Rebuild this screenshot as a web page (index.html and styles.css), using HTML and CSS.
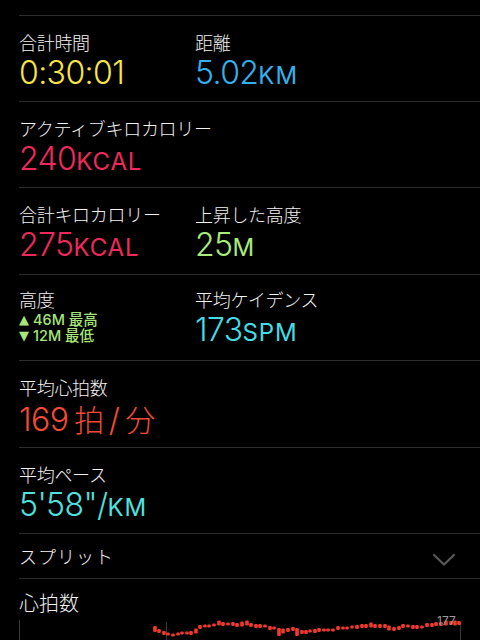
FILE: index.html
```html
<!DOCTYPE html>
<html lang="ja">
<head>
<meta charset="utf-8">
<link rel="stylesheet" href="styles.css">
</head>
<body>
<div class="screen">
  <div class="top-gap"></div>
  <section class="row">
    <div class="cell first">
      <div class="label">合計時間</div>
      <div class="value yellow">0:30:01</div>
    </div>
    <div class="cell">
      <div class="label">距離</div>
      <div class="value blue">5.02<span class="unit">KM</span></div>
    </div>
  </section>
  <section class="row">
    <div class="cell">
      <div class="label">アクティブキロカロリー</div>
      <div class="value pink">240<span class="unit">KCAL</span></div>
    </div>
  </section>
  <section class="row tall">
    <div class="cell first">
      <div class="label">合計キロカロリー</div>
      <div class="value pink">275<span class="unit">KCAL</span></div>
    </div>
    <div class="cell">
      <div class="label">上昇した高度</div>
      <div class="value green">25<span class="unit">M</span></div>
    </div>
  </section>
  <section class="row">
    <div class="cell first">
      <div class="label label-alt">高度</div>
      <div class="alt-line"><span class="tri">▲</span><span class="alt-txt">46M 最高</span></div>
      <div class="alt-line"><span class="tri">▼</span><span class="alt-txt">12M 最低</span></div>
    </div>
    <div class="cell">
      <div class="label label-alt">平均ケイデンス</div>
      <div class="value cyan">173<span class="unit">SPM</span></div>
    </div>
  </section>
  <section class="row tall">
    <div class="cell">
      <div class="label">平均心拍数</div>
      <div class="value red"><span>169</span><span class="cjk beat">拍</span><span class="slash">/</span><span class="cjk">分</span></div>
    </div>
  </section>
  <section class="row">
    <div class="cell">
      <div class="label">平均ペース</div>
      <div class="value aqua">5'58"/<span class="unit">KM</span></div>
    </div>
  </section>
  <section class="split">
    <span class="split-label">スプリット</span>
    <svg class="chev" width="24" height="14" viewBox="0 0 24 14"><path d="M2 2 L12 11.5 L22 2" fill="none" stroke="#5a5a5c" stroke-width="2.2" stroke-linecap="round" stroke-linejoin="round"/></svg>
  </section>
  <section class="hr">
    <div class="hr-label">心拍数</div>
    <div class="chart">
      <svg width="462" height="24" viewBox="0 616 462 24" id="chart">
        <line x1="19.5" y1="620" x2="19.5" y2="640" stroke="#3a3a3c" stroke-width="1"/>
        <line x1="166.5" y1="622" x2="166.5" y2="640" stroke="#3a3a3c" stroke-width="1"/>
        <line x1="460.5" y1="622" x2="460.5" y2="640" stroke="#3a3a3c" stroke-width="1"/>
        <g fill="#f2392c" id="bars"></g>
        <text x="437" y="624.5" class="ax">177</text>
      </svg>
    </div>
  </section>
</div>
<script src="chart.js"></script>
</body>
</html>
```
FILE: chart.js
```js
(function(){
  var pts=[[155,629,6],[159,631,4],[164,633,4],[168,634,3],[173,635,3],[178,634,3],[182,633,3],[187,633,3],[191,633,4],[196,631,5],[200,627,4],[205,626,3],[209,626,3],[214,625,3],[219,623,5],[223,624,4],[228,624,3],[233,624,4],[237,625,4],[242,624,5],[247,623,5],[251,625,4],[256,626,4],[260,626,4],[265,626,3],[270,628,4],[274,628,3],[279,632,8],[283,631,5],[288,630,4],[293,629,4],[297,632,8],[302,632,4],[306,632,4],[310,631,3],[315,631,4],[319,630,4],[324,630,3],[328,630,3],[333,630,3],[338,628,4],[343,628,3],[347,628,3],[352,627,3],[357,627,4],[362,626,4],[366,626,4],[371,625,5],[375,626,4],[380,626,4],[385,626,4],[389,628,5],[394,629,4],[399,628,4],[403,626,4],[408,626,3],[413,627,4],[417,627,4],[422,627,3],[427,625,4],[432,625,4],[436,624,4],[441,624,4],[446,623,5],[451,623,4],[455,623,5],[459,623,4]];
  var g=document.getElementById('bars');
  var ns='http://www.w3.org/2000/svg';
  pts.forEach(function(p){
    var r=document.createElementNS(ns,'rect');
    r.setAttribute('x',p[0]-1.8);
    r.setAttribute('y',p[1]-p[2]/2);
    r.setAttribute('width',3.6);
    r.setAttribute('height',p[2]);
    r.setAttribute('rx',1.2);
    g.appendChild(r);
  });
})();
```
FILE: styles.css
```css
html, body {
  margin: 0;
  padding: 0;
  background: #000;
}
body {
  width: 480px;
  height: 640px;
  overflow: hidden;
  font-family: "Inter", "Noto Sans CJK JP", sans-serif;
  color: #fff;
}
.screen {
  display: flex;
  flex-direction: column;
}
.top-gap {
  height: 15px;
}
.row {
  margin-left: 19px;
  border-top: 1px solid #2c2c2e;
  height: 72px;
  display: flex;
  padding-top: 13px;
}
.row.tall {
  height: 73px;
}
.cell {
  display: flex;
  flex-direction: column;
}
.cell.first {
  width: 176px;
}
.label {
  font-family: "Noto Sans CJK JP", sans-serif;
  font-weight: 300;
  font-size: 18px;
  line-height: 26px;
  letter-spacing: -0.3px;
  color: #f2f2f2;
  white-space: nowrap;
}
.label-alt {
  margin-top: -2px;
}
.value {
  font-family: "Inter", "Noto Sans CJK JP", sans-serif;
  font-weight: 300;
  font-size: 32px;
  line-height: 36px;
  height: 36px;
  letter-spacing: -0.6px;
  white-space: nowrap;
  display: flex;
  align-items: baseline;
}
.unit {
  font-size: 24px;
  font-weight: 400;
  letter-spacing: 0.9px;
}
.cjk {
  font-family: "Noto Sans CJK JP", sans-serif;
  font-weight: 300;
  font-size: 30px;
}
.cjk.beat {
  margin-left: 6px;
}
.slash {
  margin: 0 6px 0 5px;
}
.yellow { color: #f6e64a; }
.blue { color: #33b1ee; }
.pink { color: #f0295c; }
.green { color: #a9ec7c; }
.cyan { color: #42dde6; }
.red { color: #f24a34; }
.aqua { color: #4fe2df; }
.alt-line {
  font-family: "Inter", "Noto Sans CJK JP", sans-serif;
  font-weight: 500;
  font-size: 15px;
  line-height: 16px;
  height: 16px;
  color: #a6e67a;
  white-space: nowrap;
  display: flex;
  align-items: center;
  gap: 4px;
}
.tri {
  font-family: "DejaVu Sans", sans-serif;
  font-size: 13px;
}
.alt-txt {
  font-size: 14.5px;
}
.split {
  margin-left: 19px;
  border-top: 1px solid #2c2c2e;
  border-bottom: 1px solid #2c2c2e;
  height: 44px;
  display: flex;
  align-items: center;
  justify-content: space-between;
  padding-right: 24px;
}
.split-label {
  font-family: "Noto Sans CJK JP", sans-serif;
  font-weight: 300;
  font-size: 18px;
  color: #f2f2f2;
  letter-spacing: 1px;
}
.chev {
  margin-top: 7px;
}
.hr-label {
  margin-left: 19px;
  margin-top: 11px;
  font-family: "Noto Sans CJK JP", sans-serif;
  font-weight: 300;
  font-size: 20px;
  line-height: 26px;
  color: #f2f2f2;
}
.chart {
  height: 24px;
}
.chart svg {
  display: block;
  overflow: visible;
}
.ax {
  font-family: "Inter", sans-serif;
  font-size: 12px;
  fill: #9a9a9a;
}
```
